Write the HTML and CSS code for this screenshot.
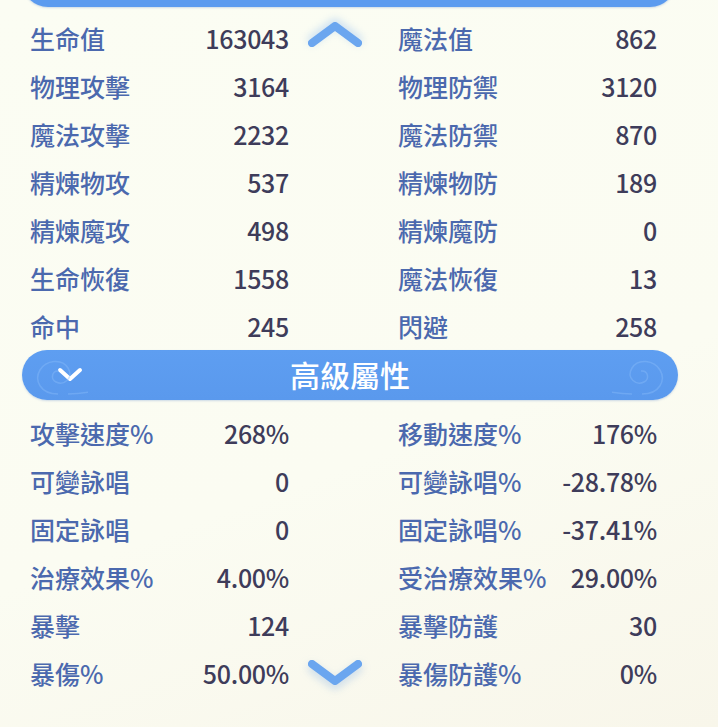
FILE: index.html
```html
<!DOCTYPE html>
<html lang="zh-Hant">
<head>
<meta charset="utf-8">
<title>屬性</title>
<link rel="stylesheet" href="styles.css">
</head>
<body>
<div class="panel">
  <div class="cap"></div>

  <section class="stats basic">
    <svg class="scroll-hint up" viewBox="0 0 56 28" aria-hidden="true"><path d="M5 23 L28 6 L51 23"/></svg>
    <div class="stat"><span class="k">生命值</span><span class="v">163043</span></div>
    <div class="stat"><span class="k">魔法值</span><span class="v">862</span></div>
    <div class="stat"><span class="k">物理攻擊</span><span class="v">3164</span></div>
    <div class="stat"><span class="k">物理防禦</span><span class="v">3120</span></div>
    <div class="stat"><span class="k">魔法攻擊</span><span class="v">2232</span></div>
    <div class="stat"><span class="k">魔法防禦</span><span class="v">870</span></div>
    <div class="stat"><span class="k">精煉物攻</span><span class="v">537</span></div>
    <div class="stat"><span class="k">精煉物防</span><span class="v">189</span></div>
    <div class="stat"><span class="k">精煉魔攻</span><span class="v">498</span></div>
    <div class="stat"><span class="k">精煉魔防</span><span class="v">0</span></div>
    <div class="stat"><span class="k">生命恢復</span><span class="v">1558</span></div>
    <div class="stat"><span class="k">魔法恢復</span><span class="v">13</span></div>
    <div class="stat"><span class="k">命中</span><span class="v">245</span></div>
    <div class="stat"><span class="k">閃避</span><span class="v">258</span></div>
  </section>

  <div class="section-bar">
    <svg class="swirl left" viewBox="0 0 60 50" aria-hidden="true"><path d="M30 44 C12 44 6 30 12 20 C18 10 34 8 40 18 C46 28 36 36 28 32 C22 29 24 20 31 21"/><path d="M40 44 C60 44 66 40 80 40"/></svg>
    <svg class="chev" viewBox="0 0 26 16" aria-hidden="true"><path d="M3 3 L13 12 L23 3"/></svg>
    <h2 class="title">高級屬性</h2>
    <svg class="swirl right" viewBox="0 0 60 50" aria-hidden="true"><path d="M30 44 C48 44 54 30 48 20 C42 10 26 8 20 18 C14 28 24 36 32 32 C38 29 36 20 29 21"/><path d="M20 44 C0 44 -6 40 -20 40"/></svg>
  </div>

  <section class="stats advanced">
    <svg class="scroll-hint down" viewBox="0 0 56 28" aria-hidden="true"><path d="M5 5 L28 22 L51 5"/></svg>
    <div class="stat"><span class="k">攻擊速度%</span><span class="v">268%</span></div>
    <div class="stat"><span class="k">移動速度%</span><span class="v">176%</span></div>
    <div class="stat"><span class="k">可變詠唱</span><span class="v">0</span></div>
    <div class="stat"><span class="k">可變詠唱%</span><span class="v">-28.78%</span></div>
    <div class="stat"><span class="k">固定詠唱</span><span class="v">0</span></div>
    <div class="stat"><span class="k">固定詠唱%</span><span class="v">-37.41%</span></div>
    <div class="stat"><span class="k">治療效果%</span><span class="v">4.00%</span></div>
    <div class="stat"><span class="k">受治療效果%</span><span class="v">29.00%</span></div>
    <div class="stat"><span class="k">暴擊</span><span class="v">124</span></div>
    <div class="stat"><span class="k">暴擊防護</span><span class="v">30</span></div>
    <div class="stat"><span class="k">暴傷%</span><span class="v">50.00%</span></div>
    <div class="stat"><span class="k">暴傷防護%</span><span class="v">0%</span></div>
  </section>
</div>
</body>
</html>
```

FILE: styles.css
```css
html, body {
  margin: 0;
  padding: 0;
}

body {
  width: 718px;
  height: 727px;
  overflow: hidden;
  background: linear-gradient(160deg, #fbfdf3 0%, #fbfcf2 60%, #f8f6ea 100%);
  font-family: "Noto Sans CJK TC", "Noto Sans", sans-serif;
}

.panel {
  display: flex;
  flex-direction: column;
}

/* bottom edge of the previous section's bar */
.cap {
  height: 50px;
  margin: -43px 42px 0 22px;
  border-radius: 0 0 26px 26px;
  background: #5b9bef;
  box-shadow: 0 1px 2px rgba(70, 120, 200, 0.25);
}

.stats {
  position: relative;
  display: grid;
  grid-template-columns: 259px 259px;
  column-gap: 109px;
  padding-left: 30px;
}

.basic {
  margin-top: 8px;
}

.advanced {
  margin-top: 9px;
}

.stat {
  height: 48px;
  display: flex;
  align-items: center;
  justify-content: space-between;
  font-size: 25px;
  font-weight: 500;
  line-height: 1;
  white-space: nowrap;
}

.basic .stat {
  height: 47.9px;
}

.k {
  color: #4b69ae;
}

.v {
  color: #3e3c5a;
  letter-spacing: -0.3px;
}

.scroll-hint {
  position: absolute;
  left: 307px;
  width: 56px;
  height: 28px;
  fill: none;
  stroke: #6ba6ef;
  stroke-width: 8;
  stroke-linecap: round;
  stroke-linejoin: round;
}

.scroll-hint.up {
  top: 5px;
  filter: drop-shadow(0 -3px 4px rgba(130, 180, 240, 0.45));
}

.scroll-hint.down {
  top: 250px;
  filter: drop-shadow(0 4px 4px rgba(110, 160, 225, 0.35));
}

.section-bar {
  position: relative;
  height: 50px;
  margin: 0 40px 0 22px;
  border-radius: 25px;
  background: linear-gradient(180deg, #5e9ef1 0%, #5a99ed 100%);
  box-shadow: 0 1px 2px rgba(70, 120, 200, 0.25);
  display: grid;
  grid-template-columns: 1fr auto 1fr;
  align-items: center;
  overflow: hidden;
}

.chev {
  grid-column: 1;
  grid-row: 1;
  justify-self: start;
  margin-left: 35px;
  width: 26px;
  height: 16px;
  fill: none;
  stroke: #ffffff;
  stroke-width: 4;
  stroke-linecap: round;
  stroke-linejoin: round;
}

.title {
  grid-column: 2;
  grid-row: 1;
  margin: 0 0 2px;
  font-size: 30px;
  font-weight: 500;
  color: #ffffff;
  line-height: 1;
  letter-spacing: 0;
}

.swirl {
  position: absolute;
  top: 0;
  width: 60px;
  height: 50px;
  fill: none;
  stroke: rgba(140, 190, 250, 0.4);
  stroke-width: 1.5;
}

.swirl.left {
  left: 6px;
}

.swirl.right {
  right: 6px;
}
```
